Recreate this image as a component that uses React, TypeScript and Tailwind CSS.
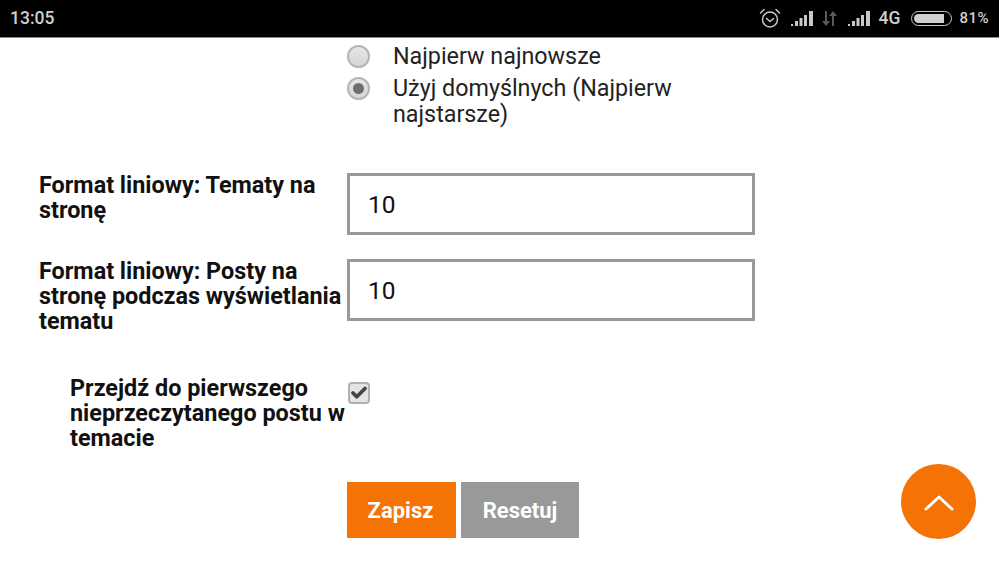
import { Check } from 'lucide-react'

function Radio({ checked }: { checked?: boolean }) {
  return (
    <span className="w-[23px] h-[23px] shrink-0 rounded-full border-2 border-[#b5b5b5] bg-gradient-to-b from-[#e6e6e6] to-[#d6d6d6] flex items-center justify-center">
      {checked && <span className="w-[11px] h-[11px] rounded-full bg-[#6e6e6e]" />}
    </span>
  )
}

function SignalIcon() {
  return (
    <svg width="25" height="16" viewBox="0 0 25 16" fill="#c8c8c8">
      <rect x="0" y="13" width="2" height="2" />
      <rect x="4" y="10" width="3" height="5" />
      <rect x="8.5" y="7" width="3" height="8" />
      <rect x="13" y="4" width="3" height="11" />
      <rect x="18" y="0" width="4" height="15" />
    </svg>
  )
}

export default function App() {
  return (
    <div className="w-[999px] h-[562px] bg-white overflow-hidden font-['Roboto',sans-serif] text-[#111]">
      {/* Status bar */}
      <div className="h-[38px] bg-black border-b border-[#8a8a8a] flex items-center justify-between pl-[10px] pr-[10px] text-[#cfcfcf] font-medium">
        <span className="text-[17.5px]">13:05</span>
        <div className="flex items-center">
          <svg width="22" height="21" viewBox="0 0 22 21" fill="none" stroke="#c8c8c8" strokeWidth="1.5" strokeLinecap="round" strokeLinejoin="round">
            <circle cx="11" cy="11.5" r="7.5" />
            <path d="M7.5 10.5 11 13.5l3.5-3" />
            <path d="M1.5 5 5 1.5M20.5 5 17 1.5" />
          </svg>
          <span className="ml-[10px]"><SignalIcon /></span>
          <svg className="ml-[5px]" width="17" height="17" viewBox="0 0 17 17" fill="#5a5a5a">
            <path d="M4 1h2v10h3l-4 5-4-5h3zM11 16h2V6h3l-4-5-4 5h3z" />
          </svg>
          <span className="ml-[10px]"><SignalIcon /></span>
          <span className="ml-[6px] text-[17.5px]">4G</span>
          <span className="ml-[11px] w-[41px] h-[15px] rounded-full border-[1.5px] border-[#c8c8c8] flex items-center p-[2px]">
            <span className="h-full w-[30px] rounded-l-full rounded-r-[2px] bg-[#cfcfcf]" />
          </span>
          <span className="ml-[7px] text-[15px] tracking-[0.5px]">81%</span>
        </div>
      </div>

      {/* Form */}
      <div className="relative">
        <div className="pl-[347px] pt-[5px] text-[23.3px] leading-[26px] text-[#222]">
          <div className="flex items-center gap-[23px] h-[27px]">
            <Radio />
            <span className="pb-[2px]">Najpierw najnowsze</span>
          </div>
          <div className="flex items-start gap-[23px] mt-[5px]">
            <span className="pt-[2px]"><Radio checked /></span>
            <span className="w-[340px]">Użyj domyślnych (Najpierw najstarsze)</span>
          </div>
        </div>

        <div className="flex mt-[46px] pl-[39px]">
          <label className="w-[308px] text-[23.4px] leading-[25px] font-bold">
            Format liniowy: Tematy na stronę
          </label>
          <div className="w-[408px] h-[62px] border-[3px] border-[#999] flex items-center pl-[18px] pt-[2px] text-[24.5px]">10</div>
        </div>

        <div className="flex mt-[24px] pl-[39px]">
          <label className="w-[308px] text-[23.4px] leading-[25px] font-bold">
            Format liniowy: Posty na stronę podczas wyświetlania tematu
          </label>
          <div className="w-[408px] h-[62px] border-[3px] border-[#999] flex items-center pl-[18px] pt-[2px] text-[24.5px]">10</div>
        </div>

        <div className="flex mt-[42px] pl-[70px]">
          <label className="w-[277px] text-[23.4px] leading-[25px] font-bold">
            Przejdź do pierwszego nieprzeczytanego postu w temacie
          </label>
          <span className="w-[22px] h-[22px] mt-[6px] ml-[1px] rounded-[4px] border-2 border-[#b0b0b0] bg-[#e4e4e4] flex items-center justify-center">
            <Check size={20} strokeWidth={5} className="text-[#444]" />
          </span>
        </div>

        <div className="flex gap-[5px] mt-[31px] pl-[347px]">
          <button className="w-[109px] h-[56px] bg-[#f47304] text-white font-bold text-[22px] pr-[2px]">Zapisz</button>
          <button className="w-[118px] h-[56px] bg-[#999] text-white font-bold text-[22px]">Resetuj</button>
        </div>

        {/* Scroll to top */}
        <div className="absolute left-[901px] top-[426px] w-[75px] h-[75px] rounded-full bg-[#f47304] flex items-center justify-center">
          <svg className="mt-[2px]" width="30" height="18" viewBox="0 0 30 18" fill="none" stroke="white" strokeWidth="3" strokeLinecap="round" strokeLinejoin="round">
            <path d="M2 15 15 3l13 12" />
          </svg>
        </div>
      </div>
    </div>
  )
}
